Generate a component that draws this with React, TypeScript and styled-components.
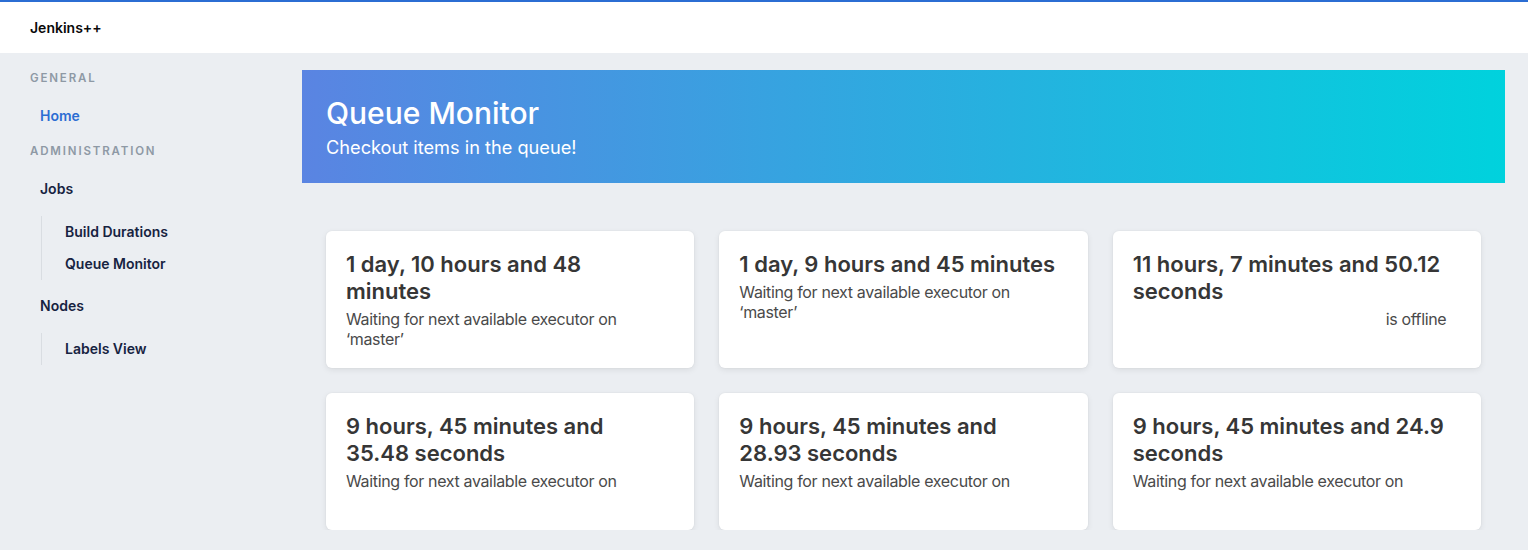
import React from "react";
import styled, { createGlobalStyle } from "styled-components";

type Item = { time: string; detail: React.ReactNode };

const items: Item[] = [
  { time: "1 day, 10 hours and 48 minutes", detail: "Waiting for next available executor on ‘master’" },
  { time: "1 day, 9 hours and 45 minutes", detail: "Waiting for next available executor on ‘master’" },
  { time: "11 hours, 7 minutes and 50.12 seconds", detail: <><Gap />is offline</> },
  { time: "9 hours, 45 minutes and 35.48 seconds", detail: "Waiting for next available executor on" },
  { time: "9 hours, 45 minutes and 28.93 seconds", detail: "Waiting for next available executor on" },
  { time: "9 hours, 45 minutes and 24.9 seconds", detail: "Waiting for next available executor on" },
];

function Gap() {
  return <Spacer />;
}

const App = () => {
  return (
    <>
      <GlobalStyle />
      <Navbar>
        <Brand>Jenkins++</Brand>
      </Navbar>
      <Layout>
        <Sidebar>
          <MenuLabel>General</MenuLabel>
          <MenuList>
            <li><MenuLink active>Home</MenuLink></li>
          </MenuList>
          <MenuLabel>Administration</MenuLabel>
          <MenuList>
            <li>
              <MenuLink>Jobs</MenuLink>
              <SubList>
                <li><MenuLink>Build Durations</MenuLink></li>
                <li><MenuLink>Queue Monitor</MenuLink></li>
              </SubList>
            </li>
            <li>
              <MenuLink>Nodes</MenuLink>
              <SubList>
                <li><MenuLink>Labels View</MenuLink></li>
              </SubList>
            </li>
          </MenuList>
        </Sidebar>
        <Main>
          <Hero>
            <HeroTitle>Queue Monitor</HeroTitle>
            <HeroSubtitle>Checkout items in the queue!</HeroSubtitle>
          </Hero>
          <Grid>
            {items.map((item, i) => (
              <Card key={i}>
                <CardTitle>{item.time}</CardTitle>
                <CardText>{item.detail}</CardText>
              </Card>
            ))}
          </Grid>
        </Main>
      </Layout>
    </>
  );
};

// styles

const GlobalStyle = createGlobalStyle`
  html, body {
    margin: 0;
    padding: 0;
    background: #ebeef2;
    font-family: Inter, "Noto Sans", "Liberation Sans", sans-serif;
  }
  * { box-sizing: border-box; }
`;

const Navbar = styled.header`
  height: 53px;
  background: #fff;
  border-top: 2px solid #2b6dd3;
  display: flex;
  align-items: center;
  padding: 0 30px 1px;
`;

const Brand = styled.div`
  font-size: 14px;
  font-weight: 600;
  color: #0a0a0a;
`;

const Layout = styled.div`
  display: flex;
  align-items: flex-start;
`;

const Sidebar = styled.aside`
  width: 302px;
  flex-shrink: 0;
  padding: 16px 0 0 30px;
`;

const MenuLabel = styled.p`
  margin: 0 0 13px;
  font-size: 11.5px;
  line-height: 18px;
  font-weight: 600;
  letter-spacing: 0.16em;
  text-transform: uppercase;
  color: #8e99a5;
`;

const MenuList = styled.ul`
  list-style: none;
  margin: 0 0 10px;
  padding: 0;
`;

const SubList = styled.ul`
  list-style: none;
  margin: 11px 0 10px 11px;
  padding-left: 13px;
  border-left: 1px solid #d9dde2;
`;

const MenuLink = styled.a<{ active?: boolean }>`
  display: block;
  padding: 6px 10px;
  font-size: 14px;
  line-height: 20px;
  font-weight: 600;
  color: ${(p) => (p.active ? "#2b6dd3" : "#172341")};
  cursor: pointer;
`;

const Main = styled.main`
  flex: 1;
  padding: 17px 23px 0 0;
`;

const Hero = styled.section`
  height: 113px;
  padding: 26px 24px;
  background: linear-gradient(to right, #5a84e2, #00d2dd);
  color: #fff;
`;

const HeroTitle = styled.h1`
  margin: 0;
  font-size: 30px;
  line-height: 34px;
  font-weight: 500;
`;

const HeroSubtitle = styled.h2`
  margin: 0;
  font-size: 18.2px;
  line-height: 34px;
  font-weight: 400;
`;

const Grid = styled.div`
  display: grid;
  grid-template-columns: repeat(3, 1fr);
  grid-auto-rows: 137px;
  gap: 25px;
  padding: 48px 24px 0;
`;

const Card = styled.div`
  background: #fff;
  border-radius: 6px;
  padding: 20px 28px 20px 20px;
  box-shadow: 0 2px 6px rgba(10, 10, 10, 0.08), 0 0 0 1px rgba(10, 10, 10, 0.015);
`;

const CardTitle = styled.div`
  font-size: 22px;
  line-height: 27px;
  font-weight: 600;
  color: #363636;
  margin-bottom: 4px;
`;

const CardText = styled.div`
  font-size: 16px;
  line-height: 20px;
  letter-spacing: -0.35px;
  color: #4a4a4a;
`;

const Spacer = styled.span`
  display: inline-block;
  width: 253px;
`;

export default App;
